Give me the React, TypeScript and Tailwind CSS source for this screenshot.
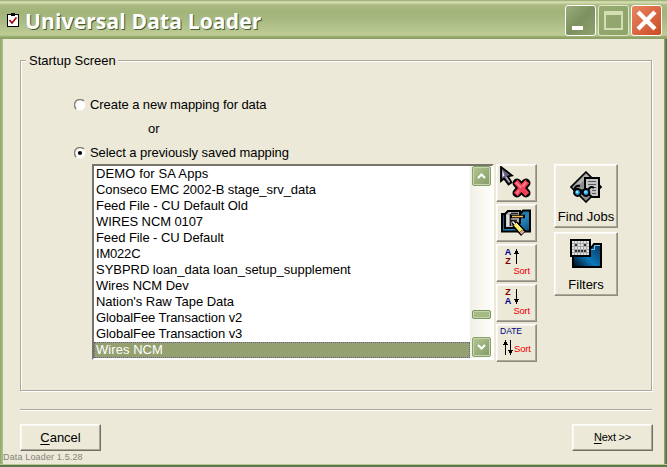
import React from "react";

const PUSH_BUTTON =
  "h-[27px] w-[81px] border border-t-white border-l-white border-b-[#716f64] border-r-[#716f64] bg-[#ece9d8] shadow-[inset_-1px_-1px_0_#aca899,inset_1px_1px_0_#f8f7f1]";

const MAPPINGS: { name: string; spacing: string }[] = [
  { name: "DEMO for SA Apps", spacing: "tracking-[0.12px]" },
  { name: "Conseco EMC 2002-B stage_srv_data", spacing: "tracking-[-0.06px]" },
  { name: "Feed File - CU Default Old", spacing: "tracking-[-0.05px]" },
  { name: "WIRES NCM 0107", spacing: "tracking-[-0.1px]" },
  { name: "Feed File - CU Default", spacing: "tracking-[-0.07px]" },
  { name: "IM022C", spacing: "tracking-[-0.2px]" },
  { name: "SYBPRD loan_data loan_setup_supplement", spacing: "tracking-[-0.03px]" },
  { name: "Wires NCM Dev", spacing: "tracking-[-0.03px]" },
  { name: "Nation's Raw Tape Data", spacing: "tracking-[-0.04px]" },
  { name: "GlobalFee Transaction v2", spacing: "tracking-[-0.08px]" },
  { name: "GlobalFee Transaction v3", spacing: "tracking-[-0.08px]" },
  { name: "Wires NCM", spacing: "tracking-[0.05px]" },
];

function ClearIcon() {
  return (
    <svg width="36" height="34" viewBox="0 0 36 34">
      <path d="M3 1 V15 L6 12.5 L10.5 18.5 L13.5 16.5 L10 10.5 L14 9.5 Z" fill="#6c5f80" stroke="#000" strokeWidth="1.8" />
      <path d="M4.5 4 V11 L6.5 9.5 Z" fill="#f0edf8" />
      <path d="M8 11 L11.5 16" stroke="#c9c3d8" strokeWidth="1.2" />
      <g fill="none" strokeLinecap="square">
        <path d="M19 17 L28 27 M28 17 L19 27" stroke="#000" strokeWidth="9" strokeLinecap="round" />
        <path d="M19.5 17.5 L27.5 26.5 M27.5 17.5 L19.5 26.5" stroke="#f04058" strokeWidth="5.2" />
        <path d="M18.5 17 L22.5 21 M27.5 17 L25 20 M20.5 25 L19 27" stroke="#ff8794" strokeWidth="1.6" />
      </g>
    </svg>
  );
}

function EditIcon() {
  return (
    <svg width="36" height="34" viewBox="0 0 36 34">
      <defs>
        <linearGradient id="blueA" x1="0" y1="0" x2="1" y2="1">
          <stop offset="0" stopColor="#0a3c66" />
          <stop offset="0.6" stopColor="#2685bc" />
          <stop offset="1" stopColor="#0a4878" />
        </linearGradient>
      </defs>
      <path d="M4 8 H22 L25 4.5 H32 V25.5 H4 Z" fill="url(#blueA)" stroke="#000" strokeWidth="2" />
      <path d="M10 5 H22 V17 L18 22 H7 V8 Z" fill="#b4b4b4" stroke="#000" strokeWidth="2" />
      <path d="M8.5 9 H11 V20.5 H8.5 Z" fill="#dedede" />
      <path d="M12.5 8 V20 M13 7.5 H20 M13 14.5 H19" stroke="#222" strokeWidth="1.4" />
      <path d="M12 10.5 H27" stroke="#000" strokeWidth="3.4" />
      <path d="M14 10.5 H25" stroke="#f6b860" strokeWidth="1.5" />
      <path d="M13 14 L20 16 L28 25 L23 30 L15 21 Z" fill="#000" />
      <path d="M17 18 L23 25" stroke="#f5ec57" strokeWidth="3.6" />
      <path d="M18 17 L24.5 24" stroke="#fffcc0" strokeWidth="1" />
      <path d="M23.2 25.2 L25 27.2" stroke="#e7a3a3" strokeWidth="4" />
      <path d="M14.5 15.5 L17 18" stroke="#fff" strokeWidth="1.6" />
    </svg>
  );
}

function SortWord() {
  return <span className="text-[9.5px] leading-[10px] tracking-[-0.2px] text-[#f00000]">Sort</span>;
}

function Arrow({ down = false }: { down?: boolean }) {
  return (
    <svg width="5" height="15" viewBox="0 0 5 15" shapeRendering="crispEdges" className={down ? "rotate-180" : ""}>
      <path d="M2 0h1v15h-1z M1 2h3v3h-3z M0 4h5v1h-5z" fill="#000" />
    </svg>
  );
}

function LetterSort({ top, bottom, topColor, bottomColor, down }: { top: string; bottom: string; topColor: string; bottomColor: string; down?: boolean }) {
  return (
    <div className="flex h-full w-full flex-col pl-[6px] pt-[2px]">
      <div className="flex h-[18px] gap-[2px]">
        <div className="flex w-[8px] flex-col items-center text-[9px] font-bold leading-[9px]">
          <span className={topColor}>{top}</span>
          <span className={bottomColor}>{bottom}</span>
        </div>
        <span className="pt-px"><Arrow down={down} /></span>
      </div>
      <div className="flex justify-end pr-[5px] leading-none"><SortWord /></div>
    </div>
  );
}

function DateSort() {
  return (
    <div className="flex h-full w-full flex-col pl-[2px]">
      <span className="h-[14px] text-[8.5px] leading-[10px] text-[#000080]">DATE</span>
      <div className="flex items-end pl-[3px] leading-none">
        <Arrow /><Arrow down /><span className="pb-px pl-px"><SortWord /></span>
      </div>
    </div>
  );
}

function FindIcon() {
  return (
    <svg width="32" height="32" viewBox="0 0 32 32">
      <path d="M16 1 L31 16 L16 31 L1 16 Z" fill="#8f8f8f" stroke="#000" strokeWidth="1.6" />
      <path d="M16 3 L5 14 L10 13 L15 8 L19 6 Z" fill="#b4b4b4" />
      <path d="M15 7 H29 V26 H22 L15 20 Z" fill="#c4c4c4" stroke="#000" strokeWidth="2" />
      <path d="M18 10.5 H26 M18 13.5 H26 M20 16.5 H26 M22 19.5 H26 M22 22.5 H26" stroke="#5a5a5a" />
      <path d="M4 20 Q5 14 10 15 M18 20 Q20 14 24 17" fill="none" stroke="#000" strokeWidth="2" />
      <path d="M10 19.5 H14" stroke="#000" strokeWidth="2" />
      <circle cx="7.5" cy="21.5" r="3.4" fill="#2fa4f0" stroke="#000" strokeWidth="2" />
      <circle cx="16" cy="21.5" r="3.4" fill="#2fa4f0" stroke="#000" strokeWidth="2" />
      <circle cx="7" cy="21" r="1.2" fill="#8fe4ff" />
      <circle cx="15.5" cy="21" r="1.2" fill="#8fe4ff" />
    </svg>
  );
}

function FilterIcon() {
  return (
    <svg width="32" height="29" viewBox="0 0 32 29">
      <defs>
        <linearGradient id="blueB" x1="0" y1="1" x2="1" y2="0.2">
          <stop offset="0.1" stopColor="#021a30" />
          <stop offset="0.5" stopColor="#0a78bc" />
          <stop offset="1" stopColor="#0b3c62" />
        </linearGradient>
      </defs>
      <path d="M3 9 H21 L24 5 H31 V28 H3 Z" fill="url(#blueB)" stroke="#000" strokeWidth="2" />
      <path d="M21 10.5 H24.5 V6.5 H30" fill="none" stroke="#6cc8f4" />
      <path d="M1 1 H20 V17 H1 Z" fill="#e2e2e2" stroke="#000" strokeWidth="2" />
      <path d="M2 4.5 H19 M2 7.5 H19 M2 10.5 H19 M2 13.5 H19 M4.5 2 V16 M7.5 2 V16 M10.5 2 V16 M13.5 2 V16 M16.5 2 V16" stroke="#a8a8a8" />
      <path d="M5 5h2v2h-2z M14 5h2v2h-2z M5 11h2v2h-2z M8 11h2v2h-2z M11 11h2v2h-2z M14 11h2v2h-2z" fill="#333" />
    </svg>
  );
}

function ToolButton({ children }: { children: React.ReactNode }) {
  return (
    <button className="h-[38px] w-[41px] border border-t-white border-l-white border-b-[#8f8b7f] border-r-[#8f8b7f] bg-[#ece9d8] p-px text-left shadow-[inset_-1px_-1px_0_#aca899,inset_1px_1px_0_#f8f7f1]">
      {children}
    </button>
  );
}

function LabelledButton({ icon, label }: { icon: React.ReactNode; label: string }) {
  return (
    <button className="flex h-[64px] w-[64px] flex-col items-center border border-t-white border-l-white border-b-[#8f8b7f] border-r-[#8f8b7f] pt-[6px] shadow-[inset_-1px_-1px_0_#aca899,inset_1px_1px_0_#f8f7f1]">
      <span className="flex h-[38px] items-start">{icon}</span>
      <span className="whitespace-nowrap leading-[16px]">{label}</span>
    </button>
  );
}

function Radio({ checked = false }: { checked?: boolean }) {
  return (
    <svg width="12" height="12" viewBox="0 0 12 12">
      <circle cx="6" cy="6" r="5" fill="#fff" stroke="#fff" />
      <path d="M2.1 9.9 A5.5 5.5 0 0 1 9.9 2.1" fill="none" stroke="#85816f" strokeWidth="1.4" />
      {checked && <circle cx="6" cy="6" r="2.1" fill="#000" />}
    </svg>
  );
}

function ScrollButton({ down = false }: { down?: boolean }) {
  return (
    <div className="flex h-[20px] w-[19px] items-center justify-center rounded-[2px] border border-[#8ba070] bg-linear-to-br from-[#b3c592] to-[#849b66] shadow-[inset_0_0_0_1px_#c5d4a9]">
      <svg width="9" height="6" viewBox="0 0 9 6" className={down ? "rotate-180" : ""}>
        <path d="M1 5 L4.5 1.5 L8 5" fill="none" stroke="#fff" strokeWidth="2" />
      </svg>
    </div>
  );
}

export default function App() {
  return (
    <div className="flex h-[467px] w-[667px] flex-col overflow-hidden bg-[linear-gradient(to_right,#8ca26c_0px,#a9bb82_2px,#a9bb82_3px,#b0c088_664px,#6b865a_665px,#4f6f48_667px)] font-['Liberation_Sans',Arial,sans-serif] text-[13px] text-black">
      <header className="flex h-[39px] shrink-0 items-start bg-[linear-gradient(to_bottom,#8fa468_0px,#dbe4b8_2px,#a9ba80_5px,#a3b47b_12px,#a8b981_20px,#b6c68e_30px,#bfcd94_35px,#93a76b_37px,#8aa062_39px)] pl-[7px] pr-[5px] pt-[5px]">
        <svg width="12" height="15" viewBox="0 0 12 15" shapeRendering="crispEdges" className="mt-[8px]">
          <path d="M0 1h12v13h-12z" fill="#000" />
          <path d="M1 2h10v11h-10z" fill="#fff" />
          <path d="M4 0h4v3h-4z" fill="#000" />
          <path d="M2.5 7 L5 10 L9.5 4.5" fill="none" stroke="#a00000" strokeWidth="1.6" shapeRendering="auto" />
        </svg>
        <h1 className="ml-[6px] mt-px flex-1 whitespace-nowrap font-['Open_Sans',sans-serif] text-[21px] font-bold leading-[30px] tracking-[0.15px] text-white [text-shadow:1px_1px_0_#4a5a30]">Universal Data Loader</h1>
        <div className="flex gap-[2px]">
          <div className="h-[31px] w-[31px] rounded-[3px] border border-white bg-linear-to-tl from-[#8fa26d] via-[#7c9060] to-[#9aac7c]">
            <div className="ml-[6px] mt-[20px] h-[4px] w-[11px] bg-white" />
          </div>
          <div className="h-[31px] w-[31px] rounded-[3px] border border-[#dfe6c8] bg-linear-to-br from-[#97aa72] to-[#8da46a]">
            <div className="ml-[5px] mt-[5px] h-[19px] w-[19px] border-2 border-t-4 border-[#d3deb4]" />
          </div>
          <div className="flex h-[31px] w-[31px] items-center justify-center rounded-[3px] border border-white bg-linear-to-br from-[#e58561] to-[#cc4a20]">
            <svg width="21" height="21" viewBox="0 0 21 21"><path d="M2 2 L19 19 M19 2 L2 19" stroke="#fff" strokeWidth="4.4" /></svg>
          </div>
        </div>
      </header>

      <main className="mx-[3px] flex h-[425px] shrink-0 flex-col bg-[#ece9d8]">
        <section className="ml-[17px] mt-[21px] h-[331px] w-[632px] shrink-0 border border-[#aca899] shadow-[1px_1px_0_#fff,inset_1px_1px_0_#fff]">
          <div className="-mt-[8px] ml-[5px] h-[16px] w-[92px] bg-[#ece9d8] pl-[3px] leading-[15px]">Startup Screen</div>
          <div className="ml-[53px] mt-[28px] flex h-[16px] items-center gap-[4px] tracking-[-0.07px]"><Radio /><span>Create a new mapping for data</span></div>
          <div className="ml-[127px] mt-[8px] h-[16px] leading-[16px]">or</div>
          <div className="ml-[53px] mt-[8px] flex h-[16px] items-center gap-[4px] tracking-[-0.06px]"><Radio checked /><span>Select a previously saved mapping</span></div>

          <div className="ml-[71px] mt-[3px] flex items-start">
            <div className="flex h-[196px] w-[402px] border-2 border-t-[#77746a] border-l-[#77746a] border-b-white border-r-white bg-white">
              <ul className="w-[376px]">
                {MAPPINGS.map((m, i) => (
                  <li key={m.name} className={i === 11 ? "h-[16px] whitespace-nowrap bg-[#94a070] pl-[2px] leading-[16px] text-white outline-1 -outline-offset-1 outline-dotted outline-[#6a5f8f]" : "h-[16px] whitespace-nowrap pl-[2px] leading-[16px]"}>
                    <span className={m.spacing}>{m.name}</span>
                  </li>
                ))}
              </ul>
              <div className="flex flex-1 flex-col items-center bg-linear-to-r from-[#f1f0e6] to-[#fefefb] pb-px">
                <ScrollButton />
                <div className="mt-[124px] h-[9px] w-[19px] rounded-[2px] border border-[#7d9561] bg-[#a5b985] shadow-[inset_0_0_0_1px_#c5d4a9]" />
                <div className="mt-auto"><ScrollButton down /></div>
              </div>
            </div>
            <div className="ml-[2px] flex flex-col gap-[2px]">
              <ToolButton><ClearIcon /></ToolButton>
              <ToolButton><EditIcon /></ToolButton>
              <ToolButton><LetterSort top="A" bottom="Z" topColor="text-[#000080]" bottomColor="text-[#800000]" /></ToolButton>
              <ToolButton><LetterSort top="Z" bottom="A" topColor="text-[#800000]" bottomColor="text-[#000080]" down /></ToolButton>
              <ToolButton><DateSort /></ToolButton>
            </div>
            <div className="ml-[17px] flex flex-col gap-[4px]">
              <LabelledButton icon={<FindIcon />} label="Find Jobs" />
              <LabelledButton icon={<FilterIcon />} label="Filters" />
            </div>
          </div>
        </section>

        <div className="ml-[17px] mt-[18px] h-[2px] w-[632px] shrink-0 border-t border-[#aca899] bg-white" />
        <div className="ml-[17px] mt-[13px] flex w-[633px] shrink-0 justify-between">
          <button className={PUSH_BUTTON}><span className="underline underline-offset-2">C</span>ancel</button>
          <button className={PUSH_BUTTON + " text-[11px] tracking-[-0.2px]"}><span className="underline underline-offset-2">N</span>ext &gt;&gt;</button>
        </div>
        <div className="h-[13px] shrink-0 text-[9px] leading-[13px] tracking-[0.15px] text-[#85837a]">Data Loader 1.5.28</div>
      </main>
      <div className="h-[3px] shrink-0 border-b-2 border-t border-b-[#5c7a4e] border-t-[#b9c890]" />
    </div>
  );
}
